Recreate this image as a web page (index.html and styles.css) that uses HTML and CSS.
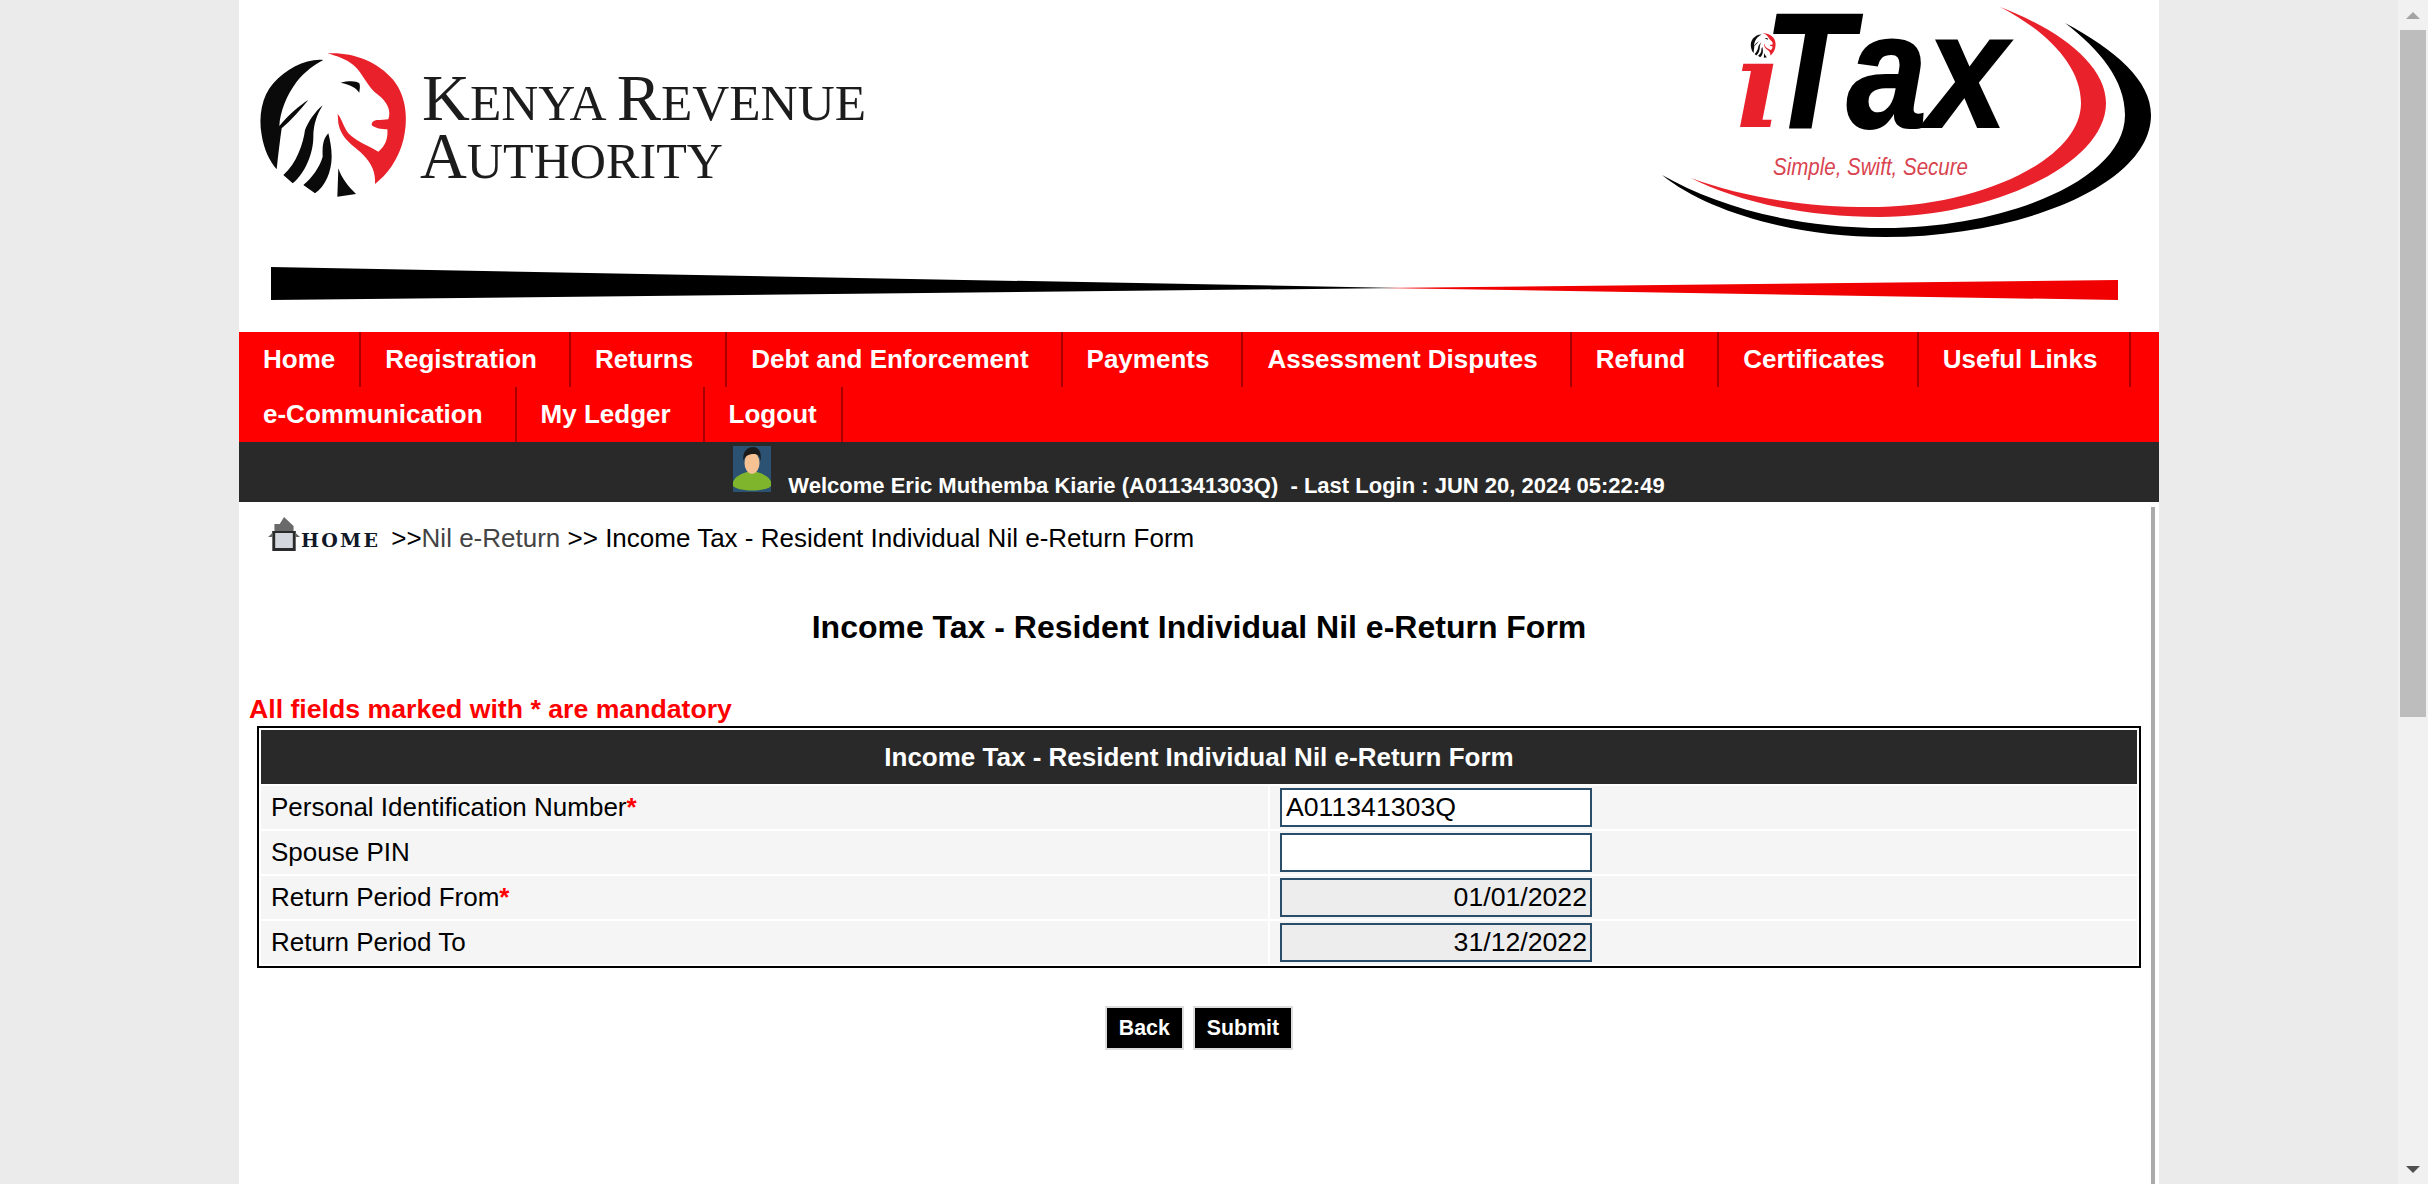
FILE: index.html
```html
<!DOCTYPE html>
<html lang="en">
<head>
    <meta charset="UTF-8">
    <meta name="viewport" content="width=device-width, initial-scale=1.0">
    <title>Income Tax - Resident Individual Nil e-Return Form</title>
    <link rel="stylesheet" href="styles.css">
</head>
<body>
    <div class="viewport">
        <div class="wrapper">
            <!-- Banner -->
            <svg class="banner" viewBox="239 0 1920 332" width="1920" height="332" role="img" aria-label="Kenya Revenue Authority iTax">
                <defs>
                    <symbol id="lion" viewBox="0 0 510 510">
                        <path fill="#e8212b" d="M232 40C300 35 380 60 430 120C470 170 475 240 460 300C445 360 410 405 375 432C378 400 365 370 340 345C310 315 275 300 265 250L263 222C275 235 280 260 295 280C320 305 360 320 385 335C405 320 415 295 412 268C395 268 375 265 365 255C365 245 372 238 390 240L415 238C425 210 410 185 385 165C350 140 340 100 310 75C290 58 260 48 232 40Z"/>
                        <path fill="#0a0a0a" d="M220 60C170 55 110 85 70 130C35 170 25 230 35 285C42 330 60 365 80 388C85 340 90 300 95 265C125 240 150 210 175 180C150 195 115 225 88 258C90 215 110 165 140 125C165 95 195 72 220 60Z"/>
                        <path fill="#0a0a0a" d="M218 196C195 215 175 245 165 270C160 310 140 370 100 405L128 430C165 400 190 340 190 290C190 255 200 225 218 196Z"/>
                        <path fill="#0a0a0a" d="M235 280C215 300 218 330 218 350C210 380 185 415 160 435L195 460C225 440 245 395 245 350C245 325 240 300 235 280Z"/>
                        <path fill="#0a0a0a" d="M265 385L262 470L318 462C295 440 275 415 265 385Z"/>
                        <path fill="#0a0a0a" d="M272 128C295 122 320 122 328 130C332 140 328 150 328 158C320 145 300 133 272 128Z"/>
                    </symbol>
                </defs>
                <use href="#lion" x="250" y="40" width="170" height="170"/>
                <text class="kra-name" x="422" y="120" textLength="444" lengthAdjust="spacingAndGlyphs"><tspan class="kra-cap">K</tspan>ENYA <tspan class="kra-cap">R</tspan>EVENUE</text>
                <text class="kra-name" x="420" y="178" textLength="303" lengthAdjust="spacingAndGlyphs"><tspan class="kra-cap">A</tspan>UTHORITY</text>

                <polygon fill="#000" points="271,267 1400,288 271,300"/>
                <polygon fill="#f00000" points="1380,288 2118,280 2118,300"/>

                <path fill="#000" d="M2065 23C2115 50 2151 80 2151 115C2151 185 2020 237 1885 237C1790 237 1705 210 1662 175C1715 205 1790 228 1885 228C2005 228 2125 180 2125 115C2125 80 2100 50 2065 23Z"/>
                <path fill="#e8212b" d="M2000 7C2060 30 2106 65 2106 103C2106 165 1990 217 1880 217C1800 217 1735 200 1691 178C1745 198 1810 208 1880 207C1980 205 2081 160 2081 103C2081 65 2045 30 2000 7Z"/>
                <use href="#lion" x="1749" y="31" width="29" height="29"/>
                <text class="itax-i" x="1733" y="127">&#305;</text>
                <text class="itax-tax" x="1764" y="127" textLength="243" lengthAdjust="spacingAndGlyphs">Tax</text>
                <text class="itax-slogan" x="1773" y="175" textLength="195" lengthAdjust="spacingAndGlyphs">Simple, Swift, Secure</text>
            </svg>

            <ul class="menu">
                <li><a href="#">Home</a></li>
                <li><a href="#">Registration</a></li>
                <li><a href="#">Returns</a></li>
                <li><a href="#">Debt and Enforcement</a></li>
                <li><a href="#">Payments</a></li>
                <li><a href="#">Assessment Disputes</a></li>
                <li><a href="#">Refund</a></li>
                <li><a href="#">Certificates</a></li>
                <li><a href="#">Useful Links</a></li>
                <li><a href="#">e-Communication</a></li>
                <li><a href="#">My Ledger</a></li>
                <li><a href="#">Logout</a></li>
            </ul>

            <div class="welcome">
                <svg class="avatar" viewBox="0 0 38 46" width="38" height="46" aria-hidden="true">
                    <rect width="38" height="46" fill="#2b5272"/>
                    <path fill="#7fb52c" d="M0 36C2 30 10 27 14 26H24C28 27 36 30 38 36V40C32 46 6 46 0 40Z"/>
                    <ellipse cx="19" cy="17" rx="7.5" ry="11" fill="#f6c193"/>
                    <path fill="#1c1c1c" d="M10.500 15C9 6 14 1 20 1C26 1 29 7 27.500 15C27 10 25 8 21 8C15 8 12 10 10.500 15Z"/>
                </svg>
                <span>Welcome Eric Muthemba Kiarie (A011341303Q) &nbsp;- Last Login : JUN 20, 2024 05:22:49</span>
            </div>

            <div class="content">
                <div class="breadcrumb">
                    <a class="home-link" href="#">
                        <svg viewBox="0 0 32 34" width="34" height="34" preserveAspectRatio="none" aria-hidden="true">
                            <path fill="#6a6a6a" d="M16 0L25 9V14L31 20H27V14H5V20H1L7 14V7H12Z"/>
                            <path fill="#2a2a2a" d="M5 14H27V34H5ZM8 16V31H24V16Z"/>
                            <rect x="8" y="16" width="16" height="15" fill="#d4d8de"/>
                        </svg>
                        <span>HOME</span>
                    </a>
                    <span class="trail">&gt;&gt;<a href="#">Nil e-Return</a> &gt;&gt; Income Tax - Resident Individual Nil e-Return Form</span>
                </div>

                <h1>Income Tax - Resident Individual Nil e-Return Form</h1>

                <p class="mandatory">All fields marked with * are mandatory</p>

                <table class="form-table">
                    <colgroup>
                        <col class="label-col">
                        <col>
                    </colgroup>
                    <thead>
                        <tr><th colspan="2">Income Tax - Resident Individual Nil e-Return Form</th></tr>
                    </thead>
                    <tbody>
                        <tr>
                            <td>Personal Identification Number<span class="req">*</span></td>
                            <td><input type="text" value="A011341303Q"></td>
                        </tr>
                        <tr>
                            <td>Spouse PIN</td>
                            <td><input type="text"></td>
                        </tr>
                        <tr>
                            <td>Return Period From<span class="req">*</span></td>
                            <td><input class="locked" type="text" value="01/01/2022" disabled></td>
                        </tr>
                        <tr>
                            <td>Return Period To</td>
                            <td><input class="locked" type="text" value="31/12/2022" disabled></td>
                        </tr>
                    </tbody>
                </table>

                <div class="actions">
                    <button type="button">Back</button>
                    <button type="button">Submit</button>
                </div>
            </div>
        </div>
    </div>

    <!-- Scrollbar -->
    <div class="scrollbar" aria-hidden="true">
        <div class="arrow-box"><div class="arrow-up"></div></div>
        <div class="thumb"></div>
        <div class="arrow-box bottom"><div class="arrow-down"></div></div>
    </div>
</body>
</html>
```

FILE: styles.css
```css
html, body {
    height: 100%;
}
body {
    display: flex;
    margin: 0;
    overflow: hidden;
    font-family: "Liberation Sans", Arial, sans-serif;
    background-color: #ebebeb;
    color: #000;
}
.viewport {
    flex: 1;
    min-width: 0;
}
.wrapper {
    display: flex;
    flex-direction: column;
    width: 1920px;
    height: 100%;
    margin: 0 auto;
    background-color: white;
}
.banner {
    display: block;
    flex: none;
}
.kra-name {
    font-family: "Liberation Serif", serif;
    font-size: 51px;
    fill: #1c1c1c;
}
.kra-cap {
    font-size: 66px;
}
.itax-i {
    font-family: "DejaVu Serif", serif;
    font-style: italic;
    font-weight: bold;
    font-size: 122px;
    fill: #e8212b;
}
.itax-tax {
    font-family: "Liberation Sans", sans-serif;
    font-style: italic;
    font-weight: bold;
    font-size: 163px;
    fill: #000;
    stroke: #000;
    stroke-width: 2px;
}
.itax-slogan {
    font-family: "Liberation Sans", sans-serif;
    font-style: italic;
    font-size: 24px;
    fill: #d9434f;
}

/* Menu */
.menu {
    display: flex;
    flex-wrap: wrap;
    flex: none;
    margin: 0;
    padding: 0;
    list-style: none;
    background-color: #f00;
}
.menu li {
    border-right: 2px solid #a80000;
}
.menu a {
    display: block;
    padding: 0 32px 0 24px;
    line-height: 55px;
    font-size: 26px;
    font-weight: bold;
    color: white;
    text-decoration: none;
}
.menu li:first-child a,
.menu li:last-child a {
    padding-right: 24px;
}

.welcome {
    display: flex;
    flex: none;
    justify-content: center;
    align-items: flex-end;
    gap: 17px;
    height: 60px;
    padding-bottom: 4px;
    box-sizing: border-box;
    background-color: #292929;
    color: white;
    font-size: 22px;
    font-weight: bold;
    line-height: 24px;
}
.avatar {
    display: block;
    margin-bottom: 6px;
}
.welcome span {
    white-space: pre;
}

/* Content */
.content {
    flex: 1;
    margin: 5px 4px 0 0;
    padding-left: 8px;
    border-right: 4px solid #aaa;
}
.breadcrumb {
    display: flex;
    align-items: flex-end;
    height: 47px;
    padding-left: 20px;
    font-size: 26px;
}
.home-link {
    display: flex;
    align-items: flex-end;
    margin: 0 11px 3px 0;
    color: #101828;
    text-decoration: none;
}
.home-link span {
    margin-bottom: 2px;
    font-family: "DejaVu Serif", serif;
    font-size: 19px;
    font-weight: bold;
    letter-spacing: 2.3px;
    line-height: 18px;
}
.trail a {
    color: #444;
    text-decoration: none;
}
h1 {
    margin: 53px 0 0;
    font-size: 32px;
    line-height: 40px;
    text-align: center;
}
.mandatory {
    margin: 47px 0 0 2px;
    font-size: 26.67px;
    font-weight: bold;
    line-height: 30px;
    color: #f00;
}
.form-table {
    width: 1884px;
    margin: 2px 0 0 10px;
    border: 2px solid #000;
    border-spacing: 2px;
    table-layout: fixed;
    font-size: 26px;
}
.label-col {
    width: 1007px;
}
.form-table th {
    height: 54px;
    padding: 0;
    background-color: #292929;
    color: white;
    font-weight: bold;
}
.form-table td {
    height: 43px;
    padding: 0 0 0 10px;
    background-color: #f5f5f5;
}
.req {
    color: #f00;
    font-weight: bold;
}
.form-table input {
    display: block;
    width: 312px;
    height: 39px;
    padding: 0 3px 0 4px;
    box-sizing: border-box;
    border: 2px solid #2a4d69;
    border-radius: 0;
    background-color: white;
    color: #000;
    font-family: "Liberation Sans", Arial, sans-serif;
    font-size: 26.67px;
}
.form-table input.locked {
    background-color: #ededed;
    text-align: right;
}
.actions {
    display: flex;
    justify-content: center;
    gap: 9px;
    margin-top: 38px;
}
.actions button {
    height: 44px;
    padding: 0 12px;
    border: 2px solid #ddd;
    background-color: #000;
    color: white;
    font-family: "Liberation Sans", Arial, sans-serif;
    font-size: 21.33px;
    font-weight: bold;
}

/* Scrollbar */
.scrollbar {
    display: flex;
    flex: none;
    flex-direction: column;
    width: 30px;
    background-color: #f1f1f1;
}
.arrow-box {
    display: flex;
    flex: none;
    justify-content: center;
    align-items: center;
    height: 30px;
}
.arrow-box.bottom {
    margin-top: auto;
}
.arrow-up {
    border-left: 7px solid transparent;
    border-right: 7px solid transparent;
    border-bottom: 7px solid #a3a3a3;
}
.arrow-down {
    border-left: 7px solid transparent;
    border-right: 7px solid transparent;
    border-top: 7px solid #505050;
}
.thumb {
    height: 687px;
    margin: 0 2px;
    background-color: #bdbdbd;
}
```
